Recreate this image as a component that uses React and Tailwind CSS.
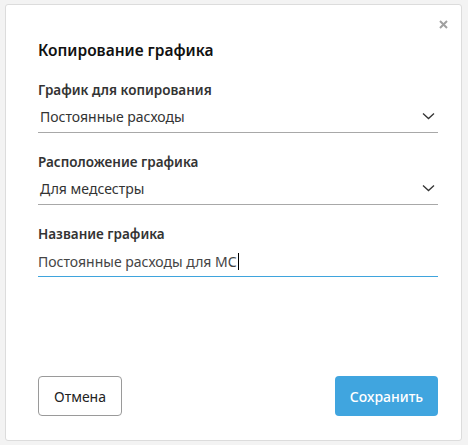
import React from 'react';

function Chevron() {
  return (
    <svg width="13" height="8" viewBox="0 0 13 8" fill="none" className="shrink-0">
      <path d="M1 1.5L6.5 6.5L12 1.5" stroke="#333" strokeWidth="1.3" />
    </svg>
  );
}

function SelectField({ label, value, first }) {
  return (
    <div className={first ? 'mt-[18px]' : 'mt-[19px]'}>
      <div className="text-[13.5px] leading-5 font-semibold text-[#333]">{label}</div>
      <div className="flex h-[33px] items-center justify-between border-b border-[#a8a8a8] pl-[2px] pr-[3px] text-[14px] text-[#333]">
        <span>{value}</span>
        <Chevron />
      </div>
    </div>
  );
}

export default function App() {
  return (
    <div
      className="flex h-[445px] w-[468px] bg-[#f3f3f3] pl-[5px] pt-[4px]"
      style={{ fontFamily: '"Noto Sans", "Liberation Sans", sans-serif' }}
    >
      <div className="relative flex h-[437px] w-[457px] flex-col rounded-[3px] border border-[#dcdcdc] bg-white pl-[32px] pr-[23px] pt-[33px] pb-[24px]">
        <button className="absolute right-[13px] top-[15px]">
          <svg width="9" height="9" viewBox="0 0 9 9">
            <path d="M1 1L8 8M8 1L1 8" stroke="#a0a0a0" strokeWidth="2" />
          </svg>
        </button>

        <h2 className="text-[15.5px] leading-6 font-semibold text-[#111]">Копирование графика</h2>

        <SelectField first label="График для копирования" value="Постоянные расходы" />
        <SelectField label="Расположение графика" value="Для медсестры" />

        <div className="mt-[19px]">
          <div className="text-[13.5px] leading-5 font-semibold text-[#333]">Название графика</div>
          <div className="flex h-[33px] items-center border-b border-[#3fa4dd] pt-[2px] text-[14px] text-[#444]">
            <span>Постоянные расходы для МС</span>
            <span className="ml-px h-[17px] w-px bg-black" />
          </div>
        </div>

        <div className="mt-auto flex items-center justify-between">
          <button className="h-10 w-[84px] rounded-[4px] border border-[#9a9a9a] bg-white text-[14px] text-[#222]">
            Отмена
          </button>
          <button className="h-10 w-[103px] rounded-[4px] bg-[#40a5df] text-[14px] font-medium text-white">
            Сохранить
          </button>
        </div>
      </div>
    </div>
  );
}
